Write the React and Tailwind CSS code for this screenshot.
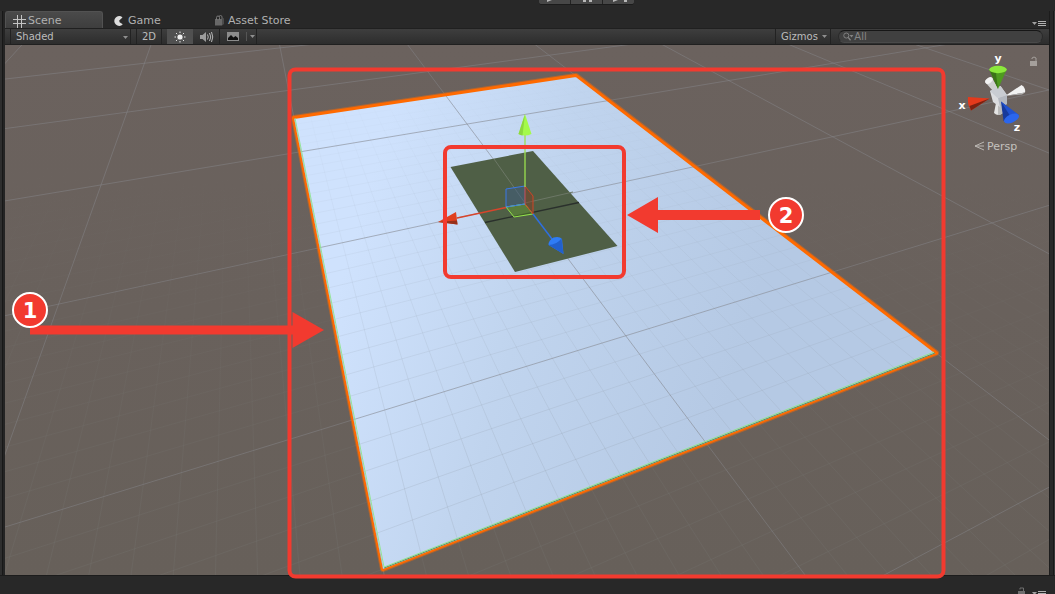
import React, { useState } from "react";

// corners of the ground plane on screen, clockwise from the far left one
const CORNERS = [
  [294, 118],
  [576, 76],
  [936, 353],
  [383, 569],
];

// perspective mapping of the ground, u runs -1..1 and v runs -1.5..1.5 on the plane
const project = (() => {
  const [[x0, y0], [x1, y1], [x2, y2], [x3, y3]] = CORNERS;
  const dx1 = x1 - x2;
  const dy1 = y1 - y2;
  const dx2 = x3 - x2;
  const dy2 = y3 - y2;
  const sx = x0 - x1 + x2 - x3;
  const sy = y0 - y1 + y2 - y3;
  const den = dx1 * dy2 - dx2 * dy1;
  const g = (sx * dy2 - dx2 * sy) / den;
  const h = (dx1 * sy - sx * dy1) / den;
  return (u, v) => {
    const s = (u + 1) / 2;
    const t = (v + 1.5) / 3;
    const w = g * s + h * t + 1;
    return [
      ((x1 - x0 + g * x1) * s + (x3 - x0 + h * x3) * t + x0) / w,
      ((y1 - y0 + g * y1) * s + (y3 - y0 + h * y3) * t + y0) / w,
    ];
  };
})();

const longLine = ([ax, ay], [bx, by]) => {
  const len = Math.hypot(bx - ax, by - ay);
  const kx = ((bx - ax) / len) * 1500;
  const ky = ((by - ay) / len) * 1500;
  const r = (n) => n.toFixed(1);
  return `M${r(ax - kx)} ${r(ay - ky)}L${r(ax + kx)} ${r(ay + ky)}`;
};

const column = (u) => longLine(project(u, -1.5), project(u, 1.5));
const row = (v) => longLine(project(-0.5, v), project(1, v));

const steps = (from, to) => {
  const list = [];
  for (let i = from; i <= to; i++) list.push(i);
  return list;
};

const MAJOR =
  steps(-3, 4).map(column).join("") + steps(-4, 2).map(row).join("");
const MINOR_COLUMNS = steps(-30, 30)
  .filter((i) => i % 10)
  .map((i) => column(i / 10))
  .join("");
const MINOR_ROWS = steps(-16, 29)
  .filter((i) => i % 10)
  .map((i) => row(i / 10))
  .join("");

const PLANE = CORNERS.map((p) => p.join(",")).join(" ");

const Caret = ({ className }) => (
  <svg viewBox="0 0 5 3" className={`w-[5px] h-[3px] ${className || ""}`}>
    <path d="M0 0h5L2.5 3z" fill="#8f8f8f" />
  </svg>
);

const MenuIcon = () => (
  <svg viewBox="0 0 14 5" className="w-[14px] h-[5px]">
    <path d="M0 1h5L2.5 4z" fill="#a0a0a0" />
    <path d="M6 .5h8M6 2.5h8M6 4.500h8" stroke="#b0b0b0" />
  </svg>
);

const GridIcon = () => (
  <svg viewBox="0 0 13 13" className="w-[13px] h-[13px]">
    <path
      d="M4.5 0v13M8.5 0v13M0 4.5h13M0 8.5h13"
      stroke="#c4c4c4"
      fill="none"
    />
  </svg>
);

const GameIcon = () => (
  <svg viewBox="0 0 10 10" className="w-[10px] h-[10px]">
    <path
      d="M8.5 1.4A4.9 4.9 0 1 0 8.8 8.3L5.6 6.2 5.2 4.6z"
      fill="#dcdcdc"
    />
  </svg>
);

const StoreIcon = () => (
  <svg viewBox="0 0 9 11" className="w-[9px] h-[11px]">
    <path d="M0 4h7v6.500H0z" fill="#686868" />
    <path d="M7 4l2-1v6L7 10.500z" fill="#4c4c4c" />
    <path
      d="M1.500 5V2.500a1.500 1.500 0 0 1 3 0V5M4 2a1.500 1.500 0 0 1 3 0v2"
      stroke="#777"
      fill="none"
    />
  </svg>
);

const SunIcon = () => (
  <svg viewBox="0 0 12 12" className="w-3 h-3">
    <circle cx="6" cy="6" r="2.600" fill="#f0f0f0" />
    <path
      d="M6 .5v1.500M6 10v1.500M.5 6H2M10 6h1.500M2 2l1.200 1.200M8.800 8.800L10 10M2 10l1.200-1.200M8.800 3.200L10 2"
      stroke="#e6e6e6"
    />
  </svg>
);

const SoundIcon = () => (
  <svg viewBox="0 0 14 12" className="w-[14px] h-3">
    <path d="M0 4h2.500L6 1v10L2.500 8H0z" fill="#9c9c9c" />
    <path
      d="M7.500 3.500q1.500 2.500 0 5M9.500 2q2.500 4 0 8M11.500 1q2.500 5 0 10"
      stroke="#b8b8b8"
      fill="none"
    />
  </svg>
);

const PictureIcon = () => (
  <svg viewBox="0 0 12 9" className="w-3 h-[9px]">
    <path d="M0 0h12v9H0z" fill="#8c8c8c" />
    <path d="M1 8V6l3-3 2.500 2.500L8.500 4 11 6v2z" fill="#101010" />
  </svg>
);

const LockIcon = () => (
  <svg viewBox="0 0 8 9" className="w-2 h-[9px]">
    <path d="M0 4h7v5H0z" fill="#6e6e6e" />
    <path d="M2 2.500V1h3.500v3" stroke="#6e6e6e" fill="none" />
  </svg>
);

const SearchIcon = () => (
  <svg viewBox="0 0 12 9" className="w-3 h-[9px]">
    <circle cx="3.500" cy="3.500" r="2.700" stroke="#848484" fill="none" />
    <path d="M5.500 5.500L8 8.500" stroke="#848484" strokeWidth="1.400" />
    <path d="M7 3h4L9 5.500z" fill="#848484" />
  </svg>
);

const PlayControls = () => (
  <div className="h-[11px] pl-[117px] flex justify-center items-start">
    <div className="flex h-[5px] rounded-b-[3px] overflow-hidden border-b border-[#1c1c1c] gap-px bg-[#222]">
      <button aria-label="Play" className="w-[31px] bg-[#474747]">
        <svg viewBox="0 0 31 4" className="w-full h-1">
          <path d="M8 0h5L8 2z" fill="#b8b8b8" />
        </svg>
      </button>
      <button aria-label="Pause" className="w-[31px] bg-[#474747]">
        <svg viewBox="0 0 31 4" className="w-full h-1">
          <path d="M12 0h3v2h-3zM18 0h3v2h-3z" fill="#b8b8b8" />
        </svg>
      </button>
      <button aria-label="Step" className="w-[31px] bg-[#474747]">
        <svg viewBox="0 0 31 4" className="w-full h-1">
          <path d="M10 0h5l-5 2zM21 0h3v2h-3z" fill="#b8b8b8" />
        </svg>
      </button>
    </div>
  </div>
);

const Tabs = ({ tab, setTab }) => {
  const base =
    "h-[17px] flex items-center text-[11px] leading-4 text-[#b0b0b0] pt-[2px]";
  const active =
    "rounded-t-[3px] border border-b-0 border-[#525252] bg-linear-to-b from-[#4a4a4a] to-[#3e3e3e]";
  return (
    <div className="flex items-end h-[17px]" role="tablist">
      <button
        role="tab"
        aria-selected={tab === "scene"}
        onClick={() => setTab("scene")}
        className={`${base} w-[98px] pl-[7px] gap-[2px] ${
          tab === "scene" ? active : ""
        }`}
      >
        <GridIcon />
        Scene
      </button>
      <button
        role="tab"
        aria-selected={tab === "game"}
        onClick={() => setTab("game")}
        className={`${base} w-[100px] pl-[11px] gap-1 ${
          tab === "game" ? active : ""
        }`}
      >
        <GameIcon />
        Game
      </button>
      <button
        role="tab"
        aria-selected={tab === "store"}
        onClick={() => setTab("store")}
        className={`${base} pl-3 pr-2 gap-1 ${tab === "store" ? active : ""}`}
      >
        <StoreIcon />
        Asset Store
      </button>
      <button aria-label="Tab options" className="ml-auto mr-[3px] mb-[2px]">
        <MenuIcon />
      </button>
    </div>
  );
};

const Toolbar = () => {
  const [light, setLight] = useState(true);
  return (
    <div className="h-[17px] flex items-stretch border-y border-[#202020] bg-linear-to-b from-[#3e3e3e] to-[#2d2d2d] text-[10px] leading-[15px] text-[#bcbcbc]">
      <div className="relative flex ml-[5px] w-[121px] border-x border-[#222]">
        <select
          aria-label="Draw mode"
          className="appearance-none w-full pl-[5px] outline-none"
        >
          <option>Shaded</option>
          <option>Wireframe</option>
          <option>Shaded Wireframe</option>
        </select>
        <Caret className="absolute right-[2px] top-[7px] pointer-events-none" />
      </div>
      <button className="ml-[5px] w-[26px] border-x border-[#222]">2D</button>
      <button
        aria-label="Scene lighting"
        onClick={() => setLight(!light)}
        className={`ml-[5px] w-[26px] flex items-center justify-center ${
          light ? "bg-[#505050]" : ""
        }`}
      >
        <SunIcon />
      </button>
      <button
        aria-label="Scene audio"
        className="w-[26px] flex items-center justify-center pl-[2px]"
      >
        <SoundIcon />
      </button>
      <button
        aria-label="Effects"
        className="w-[26px] flex items-center justify-center border-l border-[#222]"
      >
        <PictureIcon />
      </button>
      <button
        aria-label="Effects menu"
        className="w-3 flex items-center justify-center border-r border-[#222]"
      >
        <span className="w-px h-[9px] bg-[#555] mr-[3px]" />
        <Caret />
      </button>
      <button className="ml-auto w-14 flex items-center justify-between border-x border-[#222] pl-[5px] pr-[3px]">
        Gizmos
        <Caret />
      </button>
      <label className="w-[205px] h-[13px] my-px ml-[7px] mr-[6px] flex items-center rounded-full bg-[#404040] border border-t-[#161616] border-x-[#2a2a2a] border-b-[#4a4a4a] pl-1">
        <SearchIcon />
        <input
          type="text"
          aria-label="Search scene"
          placeholder="All"
          className="w-full h-[11px] text-[10px] leading-[11px] bg-transparent outline-none placeholder:text-[#868686]"
        />
      </label>
    </div>
  );
};

const MoveHandle = () => (
  <g>
    <path
      d="M506 189L525 186V204L506 207z"
      fill="#3c5c8c"
      fillOpacity=".45"
      stroke="#3a78e6"
    />
    <path
      d="M506 207L525 204 533 214 514 217z"
      fill="#6aa82e"
      fillOpacity=".4"
      stroke="#93e34a"
    />
    <path
      d="M525 186L533 196V214L525 204z"
      fill="#8a3a20"
      fillOpacity=".4"
      stroke="#cf4426"
    />
    <path d="M506 207L525 204" stroke="#3a78e6" />
    <path d="M525 187V135" stroke="#9be04f" strokeWidth="1.300" />
    <path d="M525 114L518.500 134q6.500 3 13 0z" fill="#a4fa4a" />
    <path d="M525 114L518.500 134q2 1.200 4 1.400z" fill="#8cd83e" />
    <path d="M506 207.500L457 218" stroke="#d8452c" strokeWidth="1.300" />
    <path d="M438 222L456 212l1.500 12.500z" fill="#e0401f" />
    <path d="M438 222l19 -1.500 .5 4z" fill="#96301a" />
    <path d="M533 214L552 239" stroke="#2f6fe0" strokeWidth="1.500" />
    <path
      d="M563.500 254L548.500 245q0-5 5-7.500 6-1.500 8.500 1.500z"
      fill="#2f7cf5"
    />
    <path d="M563.500 254L548.500 245q8 0 13-6.500z" fill="#2260cc" />
  </g>
);

const AxisGizmo = () => (
  <g>
    <path d="M985 82q1-4 7-4l6 10-5 3z" fill="#cfcfcf" />
    <ellipse
      cx="989"
      cy="80.500"
      rx="4.200"
      ry="2.600"
      transform="rotate(-35 989 80.500)"
      fill="#f2f2f2"
    />
    <path d="M1005 96L1021.500 85q4.500 3 3.500 7.500z" fill="#f2f2f2" />
    <path d="M1005 96l17-1.500 3-2z" fill="#b5b5b5" />
    <path d="M996 103L994 113q4 4 9 0l-2-10z" fill="#e4e4e4" />
    <path d="M998 103v12q3 0 5-2l-2-10z" fill="#bcbcbc" />
    <path d="M990 91l10.500-5 6.500 9v9l-7 3-7-5z" fill="#dcdde0" />
    <path d="M990 91l10.500-5 6.500 9-9.500 3z" fill="#c9ccd2" />
    <path d="M998 98l9-3v9l-7 3z" fill="#b4b8c0" />
    <path d="M998 89L989.500 70h17z" fill="#4f9a20" />
    <path d="M998 89L989.500 70h6z" fill="#3b7418" />
    <ellipse cx="998" cy="69.500" rx="8.800" ry="3.700" fill="#8be83c" />
    <path d="M989.500 98.500L968 97q-1 7 3 13.500z" fill="#e43a1c" />
    <path d="M989.500 98.500L969.500 106l1.500 4.500z" fill="#7a2212" />
    <path d="M1001 101.500L1003.500 121l15-5z" fill="#173a9c" />
    <path d="M1001 101.500L1012 119l7-4z" fill="#2152cf" />
    <ellipse
      cx="1011.500"
      cy="118.500"
      rx="8"
      ry="4"
      transform="rotate(-24 1011.500 118.500)"
      fill="#2b66ec"
    />
    <g fill="#fff" fontSize="11" fontWeight="700" textAnchor="middle">
      <text x="998" y="62">y</text>
      <text x="962" y="109">x</text>
      <text x="1017" y="131">z</text>
    </g>
    <path d="M1030 61h7v5h-7z" fill="#a5a09c" />
    <path d="M1032 59v-1q2-2 4 0v3" stroke="#a5a09c" fill="none" />
    <path
      d="M984 142l-9 4 9 4M975 146h9"
      stroke="#bcb8b4"
      fill="none"
    />
    <text x="987" y="150" fontSize="11" fill="#c4c1be">
      Persp
    </text>
  </g>
);

const Callouts = () => (
  <g fill="#f23a2f">
    <g fill="none" stroke="#f23a2f" strokeWidth="4">
      <rect x="289.500" y="69.500" width="654" height="507" rx="6" />
      <rect x="445" y="147" width="179" height="130" rx="6" />
    </g>
    <path d="M30 325.500H292.500V312L324 330 292.500 348V334.500H30z" />
    <path d="M760 210H658V197L627 215 658 233V220H760z" />
    <g stroke="#fff" strokeWidth="2">
      <circle cx="30" cy="310" r="17" />
      <circle cx="786" cy="215" r="17" />
    </g>
    <g fill="#fff" fontSize="21" fontWeight="700" textAnchor="middle">
      <text x="30" y="318">1</text>
      <text x="786" y="223">2</text>
    </g>
  </g>
);

const SceneView = () => (
  <svg
    viewBox="5 45 1044 530"
    className="block w-full h-auto overflow-visible relative"
    role="img"
    aria-label="Scene view"
  >
    <defs>
      <clipPath id="view">
        <rect x="5" y="45" width="1044" height="530" />
      </clipPath>
      <clipPath id="plane">
        <polygon points={PLANE} />
      </clipPath>
      <linearGradient id="ground" x1="0" y1="0" x2="0" y2="1">
        <stop offset="0" stopColor="#6b625e" />
        <stop offset="1" stopColor="#67605a" />
      </linearGradient>
      <linearGradient
        id="snow"
        gradientUnits="userSpaceOnUse"
        x1="330"
        y1="320"
        x2="720"
        y2="430"
      >
        <stop offset="0" stopColor="#cfe2fd" />
        <stop offset=".45" stopColor="#c0d4ee" />
        <stop offset="1" stopColor="#b5c9e4" />
      </linearGradient>
      <linearGradient
        id="fade"
        gradientUnits="userSpaceOnUse"
        x1="0"
        y1="160"
        x2="0"
        y2="520"
      >
        <stop offset="0" stopColor="#7c7f7c" stopOpacity="0" />
        <stop offset="1" stopColor="#7c7f7c" stopOpacity=".18" />
      </linearGradient>
      <linearGradient
        id="fadePlane"
        gradientUnits="userSpaceOnUse"
        x1="0"
        y1="100"
        x2="0"
        y2="450"
      >
        <stop offset="0" stopColor="#8a94a0" stopOpacity=".02" />
        <stop offset="1" stopColor="#8a94a0" stopOpacity=".2" />
      </linearGradient>
    </defs>
    <g clipPath="url(#view)" fill="none">
      <rect x="5" y="45" width="1044" height="530" fill="url(#ground)" />
      <path d={MINOR_COLUMNS} stroke="url(#fade)" />
      <path d={MINOR_ROWS} stroke="url(#fade)" />
      <path d={MAJOR} stroke="#85868a" strokeOpacity=".5" />
      <g strokeLinejoin="round" stroke="#ff6a00">
        <polygon points={PLANE} strokeWidth="6" strokeOpacity=".45" />
        <polygon points={PLANE} strokeWidth="4" />
      </g>
      <polygon points={PLANE} fill="url(#snow)" />
      <g clipPath="url(#plane)">
        <path d={MINOR_COLUMNS} stroke="url(#fadePlane)" />
        <path d={MINOR_ROWS} stroke="url(#fadePlane)" />
        <path d={MAJOR} stroke="#8a8f98" strokeOpacity=".65" />
      </g>
      <path d="M294 118L576 76 936 353" stroke="#ff6a00" strokeWidth="2" />
      <path d="M384 568L935 353" stroke="#5f8f5a" />
      <path d="M295 118L384 567L934 352" stroke="#8fe48c" strokeOpacity=".9" />
    </g>
    <path d="M450.500 167L533 151 617.500 246 515 272z" fill="#4f5f46" />
    <path d="M494 159L525 203 573 192" stroke="#6c7766" fill="none" />
    <path d="M485 222.500L579 202.500" stroke="#2a302c" strokeWidth="1.300" />
    <MoveHandle />
    <AxisGizmo />
    <Callouts />
  </svg>
);

const App = () => {
  const [tab, setTab] = useState("scene");

  return (
    <div className="min-h-screen flex flex-col overflow-hidden bg-[#282828] font-['DejaVu_Sans',sans-serif]">
      <PlayControls />
      <div className="flex">
        <div className="w-[5px] shrink-0 border-x-2 border-l-[#2e2e2e] border-r-[#242424] bg-[#181818]" />
        <main className="flex-1 min-w-0">
          <Tabs tab={tab} setTab={setTab} />
          <Toolbar />
          <SceneView />
        </main>
        <div className="w-[6px] shrink-0 flex justify-end border-l border-[#1c1c1c]">
          <div className="w-[2px] bg-[#383838] border-l border-[#181818]" />
        </div>
      </div>
      <footer className="h-[19px] flex justify-end items-start gap-[6px] pt-[11px] pr-[9px] overflow-hidden border-t border-[#1c1c1c]">
        <button aria-label="Lock">
          <LockIcon />
        </button>
        <button aria-label="Panel options" className="pt-1">
          <MenuIcon />
        </button>
      </footer>
    </div>
  );
};

export default App;
